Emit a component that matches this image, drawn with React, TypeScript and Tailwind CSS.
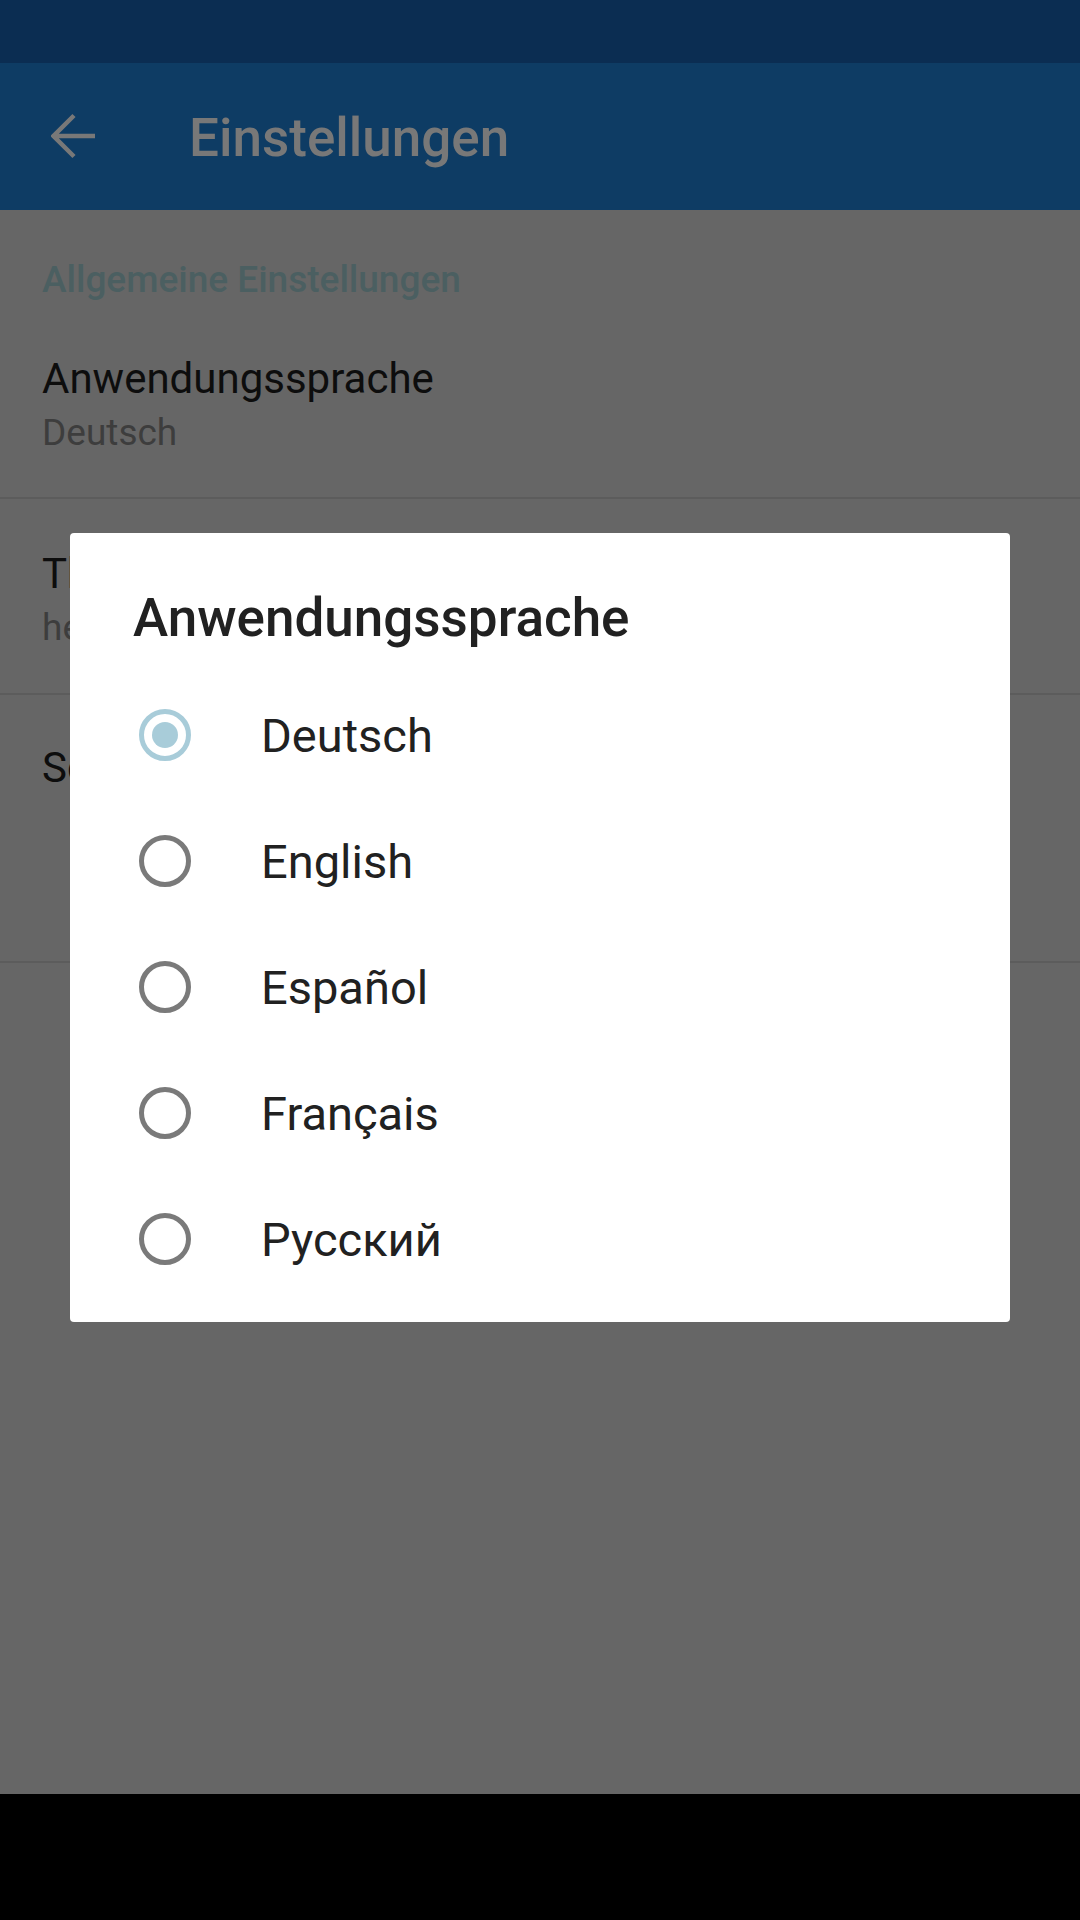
import { useState } from "react";

const languages = ["Deutsch", "English", "Español", "Français", "Русский"];

function Radio({ checked }: { checked: boolean }) {
  if (checked) {
    return (
      <div className="w-[52px] h-[52px] rounded-full border-[5px] border-[#a8ccd9] flex items-center justify-center shrink-0">
        <div className="w-[26px] h-[26px] rounded-full bg-[#a8ccd9]" />
      </div>
    );
  }
  return <div className="w-[52px] h-[52px] rounded-full border-[5px] border-[#7a7a7a] shrink-0" />;
}

function SettingsItem({ title, summary }: { title: string; summary: string }) {
  return (
    <div className="pl-[42px] pt-[54px] pb-[47px]">
      <div className="text-[42px] leading-none text-[#0d0d0d]">{title}</div>
      <div className="mt-[14px] text-[37px] leading-none text-[#3d3d3d]">{summary}</div>
    </div>
  );
}

export default function App() {
  const [selected, setSelected] = useState("Deutsch");

  return (
    <div className="relative w-[1080px] h-[1920px] overflow-hidden flex flex-col bg-[#666666] font-['Roboto','Noto_Sans',sans-serif]">
      {/* status bar */}
      <div className="h-[63px] bg-[#0b2d52] shrink-0" />

      {/* app bar */}
      <header className="h-[147px] bg-[#0e3c64] flex items-start shrink-0">
        <svg className="ml-[51px] mt-[50px]" width="46" height="46" viewBox="0 0 46 46" fill="none">
          <path d="M3 23H44M23 2.5L2.5 23L23 43.5" stroke="#787878" strokeWidth="4.5" />
        </svg>
        <h1 className="ml-[92px] mt-[49px] text-[53px] leading-none font-medium text-[#787878]">Einstellungen</h1>
      </header>

      {/* settings list */}
      <main className="flex-1 flex flex-col">
        <div className="pl-[42px] pt-[51px] text-[37px] leading-none font-medium text-[#4b5f61]">
          Allgemeine Einstellungen
        </div>
        <div className="pl-[42px] pt-[60px] pb-[46px]">
          <div className="text-[42px] leading-none text-[#0d0d0d]">Anwendungssprache</div>
          <div className="mt-[14px] text-[37px] leading-none text-[#3d3d3d]">Deutsch</div>
        </div>
        <div className="h-[2px] bg-[#5c5c5c]" />
        <SettingsItem title="Thema" summary="hell" />
        <div className="h-[2px] bg-[#5c5c5c]" />
        <div className="h-[266px] pl-[42px] pt-[52px]">
          <div className="text-[42px] leading-none text-[#0d0d0d]">Schriftgröße</div>
        </div>
        <div className="h-[2px] bg-[#5c5c5c]" />
        <div className="flex-1" />
        {/* navigation bar */}
        <div className="h-[126px] bg-black shrink-0" />
      </main>

      {/* dialog */}
      <div className="absolute left-[70px] top-[533px] w-[940px] bg-white rounded-[4px] pt-[59px] pb-[20px]">
        <h2 className="pl-[63px] text-[53px] leading-none font-medium text-[#212121]">Anwendungssprache</h2>
        <div className="mt-[27px] flex flex-col">
          {languages.map((lang) => (
            <button
              key={lang}
              onClick={() => setSelected(lang)}
              className="h-[126px] pl-[69px] flex items-center gap-[70px] text-left"
            >
              <Radio checked={selected === lang} />
              <span className="text-[47px] leading-none text-[#212121]">{lang}</span>
            </button>
          ))}
        </div>
      </div>
    </div>
  );
}
